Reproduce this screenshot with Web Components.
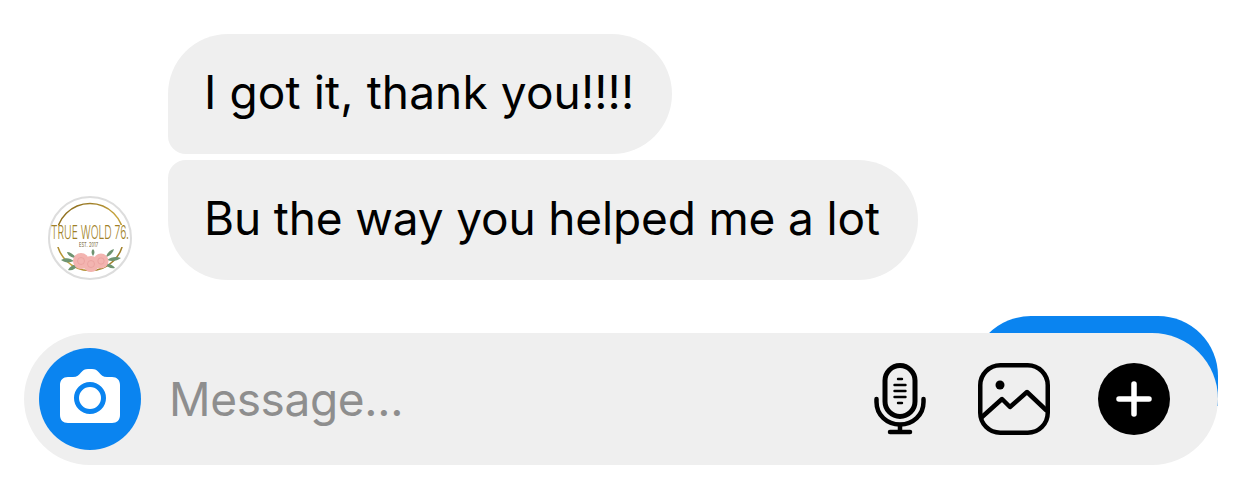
<!DOCTYPE html>
<html>
<head>
<meta charset="utf-8">
<style>
    html, body { margin: 0; background: #fff; overflow: hidden; }
    body { width: 1242px; height: 489px; font-family: Inter, "Noto Sans", sans-serif; }
</style>
</head>
<body>
<chat-screen>
    <chat-group>
        <chat-avatar slot="avatar"></chat-avatar>
        <chat-bubble pos="first">I got it, thank you!!!!</chat-bubble>
        <chat-bubble pos="last">Bu the way you helped me a lot</chat-bubble>
    </chat-group>
    <chat-composer placeholder="Message..."></chat-composer>
</chat-screen>
<script>
class ChatScreen extends HTMLElement {
    constructor() {
        super()
        this.attachShadow({mode: "open"}).innerHTML = `
            <style>
                :host { display: flex; flex-direction: column; padding-top: 34px; }
            </style>
            <slot></slot>
        `
    }
}

class ChatGroup extends HTMLElement {
    constructor() {
        super()
        this.attachShadow({mode: "open"}).innerHTML = `
            <style>
                :host { display: flex; align-items: flex-end; gap: 36px; padding-left: 48px; }
                .bubbles { display: flex; flex-direction: column; align-items: flex-start; gap: 6px; }
            </style>
            <slot name="avatar"></slot>
            <div class="bubbles"><slot></slot></div>
        `
    }
}

class ChatBubble extends HTMLElement {
    constructor() {
        super()
        this.attachShadow({mode: "open"}).innerHTML = `
            <style>
                :host {
                    display: block;
                    height: 120px;
                    box-sizing: border-box;
                    padding: 0 38px 0 36px;
                    line-height: 117px;
                    font-size: 46px;
                    color: #000;
                    background: #efefef;
                    border-radius: 60px;
                    white-space: nowrap;
                }
                :host([pos="first"]) { border-bottom-left-radius: 18px; letter-spacing: 0.12px; }
                :host([pos="last"]) { border-top-left-radius: 18px; letter-spacing: -0.15px; }
            </style>
            <slot></slot>
        `
    }
}

class ChatAvatar extends HTMLElement {
    constructor() {
        super()
        this.attachShadow({mode: "open"}).innerHTML = `
            <style>
                :host { display: block; width: 84px; height: 84px; }
                svg { display: block; }
                text { font-family: Inter, "Liberation Sans", sans-serif; }
                .name { font-weight: 300; fill: #a07f26; }
                .est { font-weight: 400; fill: #6e5a2c; }
            </style>
            <svg width="84" height="84" viewBox="0 0 84 84">
                <defs>
                    <linearGradient id="gold" x1="0" y1="0" x2="1" y2="1">
                        <stop offset="0" stop-color="#7d5f16"/>
                        <stop offset="0.55" stop-color="#c9a63f"/>
                        <stop offset="1" stop-color="#8a6a1f"/>
                    </linearGradient>
                </defs>
                <circle cx="42" cy="42" r="41" fill="#fff" stroke="#dddddd" stroke-width="2"/>
                <circle cx="42" cy="41" r="33.500" fill="none" stroke="url(#gold)" stroke-width="1.500"/>
                <rect x="4" y="29" width="76" height="22" fill="#fff"/>
                <text class="name" transform="translate(3 43) scale(1 1.8)" font-size="10.500" textLength="78" lengthAdjust="spacingAndGlyphs">TRUE WOLD 76.</text>
                <text class="est" x="31" y="50.500" font-size="5.500" textLength="19" lengthAdjust="spacingAndGlyphs">EST. 2017</text>
                <g fill="#6f9470">
                    <path d="M13 64c5-3 9-2 13 1-5 2-9 2-13-1z"/>
                    <path d="M19 56c4 0 7 3 9 6-4 0-8-2-9-6z"/>
                    <path d="M20 74c2-4 6-6 10-5-2 4-6 6-10 5z"/>
                    <path d="M73 62c-5-2-10-1-14 2 5 2 10 1 14-2z"/>
                    <path d="M66 53c-4 1-7 4-8 8 4-1 7-4 8-8z"/>
                    <path d="M45 53c-2 2-2 4 0 7 2-3 2-5 0-7z"/>
                    <path d="M67 72c-2-3-6-5-10-4 2 3 6 5 10 4z"/>
                </g>
                <g fill="#f3b4b0">
                    <circle cx="33" cy="65" r="8"/>
                    <circle cx="43" cy="68" r="8"/>
                    <circle cx="53" cy="65" r="7.500"/>
                </g>
                <g fill="none" stroke="#e9a09d" stroke-width=".8">
                    <circle cx="33" cy="65" r="3.500"/>
                    <circle cx="43" cy="68" r="3.500"/>
                    <circle cx="53" cy="65" r="3.200"/>
                </g>
            </svg>
        `
    }
}

class ChatComposer extends HTMLElement {
    constructor() {
        super()
        this.attachShadow({mode: "open"})
    }

    connectedCallback() {
        this.render()
    }

    render() {
        this.shadowRoot.innerHTML = `
            <style>
                :host { display: block; position: relative; margin: 53px 24px 0; }
                .peek {
                    position: absolute;
                    right: 0;
                    top: -17px;
                    width: 247px;
                    height: 90px;
                    background: #0a84f0;
                    border-radius: 60px 60px 0 0;
                }
                .bar {
                    position: relative;
                    display: flex;
                    align-items: center;
                    height: 132px;
                    padding: 0 48px 0 15px;
                    background: #efefef;
                    border-radius: 66px;
                }
                .camera {
                    display: flex;
                    align-items: center;
                    justify-content: center;
                    width: 102px;
                    height: 102px;
                    border-radius: 50%;
                    background: #0a84f0;
                    flex: none;
                }
                .camera svg { margin-top: -6px; }
                .placeholder {
                    flex: 1;
                    margin-left: 28px;
                    font-size: 46px;
                    letter-spacing: -0.35px;
                    color: #8e8e8e;
                }
                .actions { display: flex; align-items: center; }
                .mic { margin-right: 52px; }
                .photo { margin-right: 48px; }
                svg { display: block; }
            </style>
            <div class="peek"></div>
            <div class="bar">
                <div class="camera">
                    <svg width="60" height="54" viewBox="0 0 60 54">
                        <path fill="#fff" fill-rule="evenodd" d="M8 8H13C17 8 19 6 21 3.500C23 1 25 0 28 0H32C35 0 37 1 39 3.500C41 6 43 8 47 8H52C57 8 60 11 60 16V46C60 51 57 54 52 54H8C3 54 0 51 0 46V16C0 11 3 8 8 8ZM30 13a16 16 0 1 0 0 32 16 16 0 0 0 0-32ZM30 18a11 11 0 1 1 0 22 11 11 0 0 1 0-22Z"/>
                    </svg>
                </div>
                <div class="placeholder">${this.getAttribute("placeholder")}</div>
                <div class="actions">
                    <svg class="mic" width="52" height="72" viewBox="0 0 52 72" fill="none" stroke="#000" stroke-linecap="round">
                        <rect x="11" y="2.500" width="30" height="51" rx="15" stroke-width="5"/>
                        <path d="M2.500 36v3c0 13 10.500 22.500 23.500 22.500S49.500 52 49.500 39v-3" stroke-width="4.500"/>
                        <path d="M26 62v6" stroke-width="4.500"/>
                        <path d="M16 69h20" stroke-width="4.500"/>
                        <path d="M24 16h4M20.500 22h11M20.500 28h11M20.500 34h11M24 40h4" stroke-width="2.400"/>
                    </svg>
                    <svg class="photo" width="72" height="72" viewBox="0 0 72 72" fill="none" stroke="#000" stroke-width="4.500" stroke-linejoin="round" stroke-linecap="round">
                        <rect x="2.250" y="2.250" width="67.500" height="67.500" rx="20"/>
                        <circle cx="22" cy="22" r="4.500" fill="#000" stroke="none"/>
                        <path d="M4 54L24 36l8 8L49 29l19 18"/>
                    </svg>
                    <svg width="72" height="72" viewBox="0 0 72 72">
                        <circle cx="36" cy="36" r="36" fill="#000"/>
                        <path d="M36 21v30M21 36h30" stroke="#fff" stroke-width="5.500" stroke-linecap="round"/>
                    </svg>
                </div>
            </div>
        `
    }
}

window.customElements.define("chat-screen", ChatScreen)
window.customElements.define("chat-group", ChatGroup)
window.customElements.define("chat-bubble", ChatBubble)
window.customElements.define("chat-avatar", ChatAvatar)
window.customElements.define("chat-composer", ChatComposer)
</script>
</body>
</html>
